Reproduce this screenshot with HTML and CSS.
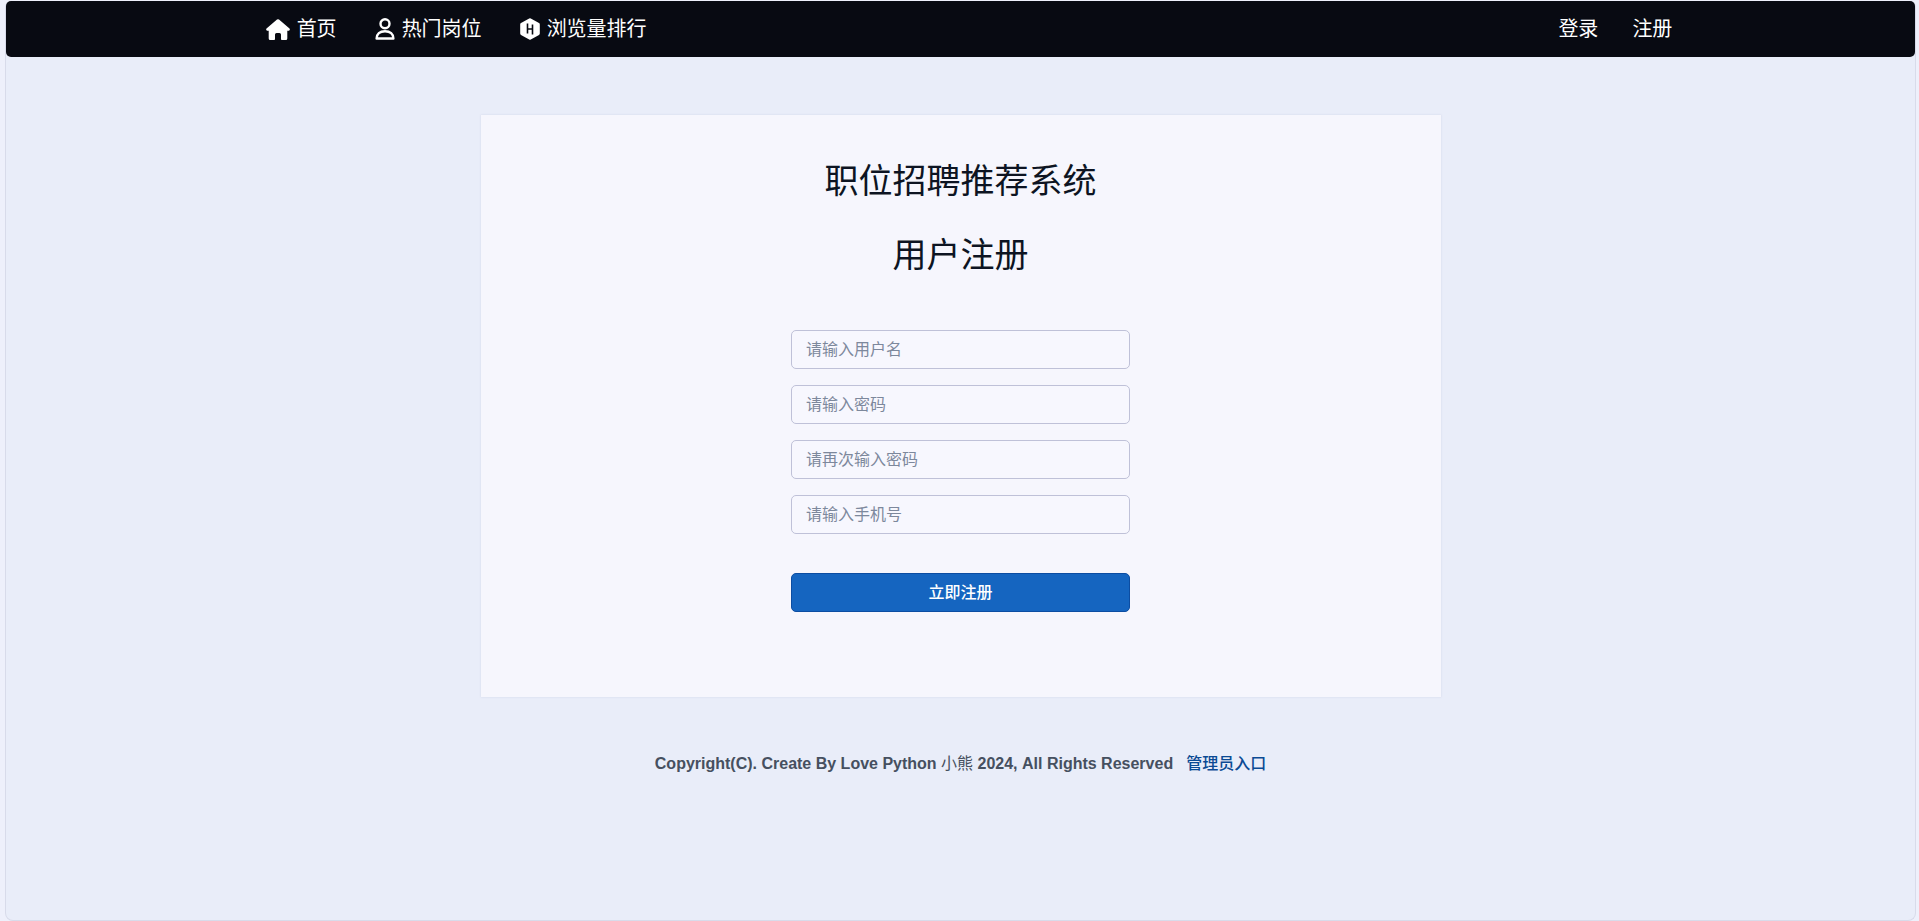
FILE: index.html
```
<!DOCTYPE html>
<html lang="zh-CN">
<head>
    <meta charset="UTF-8">
    <meta name="viewport" content="width=device-width, initial-scale=1.0">
    <title>用户注册</title>
    <link rel="stylesheet" href="styles.css">
</head>
<body>
    <div class="page">
        <nav class="navbar">
            <div class="navbar-inner">
                <div class="nav-left">
                    <a href="#">
                        <svg class="icon-home" viewBox="0 0 24 21" aria-hidden="true">
                            <path fill="currentColor" d="M11 .6Q12-.3 13 .6L23.500 9.600Q24.500 11 22.800 11.800H21.300V19.500Q21.300 21 19.800 21H15.800Q15 21 15 20V15.500Q15 14 13.500 14H10.500Q9 14 9 15.500V20Q9 21 8.200 21H4.200Q2.700 21 2.700 19.500V11.800H1.200Q-.5 11 .5 9.600Z"/>
                        </svg>
                        首页
                    </a>
                    <a href="#">
                        <svg class="icon" viewBox="0 0 20 22" aria-hidden="true">
                            <g fill="none" stroke="currentColor" stroke-width="2.400" stroke-linejoin="round">
                                <circle cx="10" cy="5.800" r="4.500"/>
                                <path d="M1.600 20.500C1.600 16 4.800 13.200 10 13.200S18.400 16 18.400 20.500Z"/>
                            </g>
                        </svg>
                        热门岗位
                    </a>
                    <a href="#">
                        <svg class="icon" viewBox="0 0 20 22" aria-hidden="true">
                            <path fill="currentColor" d="M9.200.4Q10-.1 10.800.4L19 5.100Q19.800 5.600 19.800 6.500V15.500Q19.800 16.400 19 16.900L10.800 21.600Q10 22.100 9.200 21.600L1 16.900Q.2 16.400.2 15.500V6.500Q.2 5.600 1 5.100Z"/>
                            <path fill="none" stroke="#080a12" stroke-width="1.600" d="M7.500 5.500V15.500M12.500 6.500V16.500M7.500 11H12.500"/>
                        </svg>
                        浏览量排行
                    </a>
                </div>
                <div class="nav-right">
                    <a href="#">登录</a>
                    <a href="#">注册</a>
                </div>
            </div>
        </nav>

        <main class="card">
            <h1>职位招聘推荐系统</h1>
            <h1>用户注册</h1>
            <form>
                <input type="text" name="username" placeholder="请输入用户名" aria-label="用户名">
                <input type="password" name="password" placeholder="请输入密码" aria-label="密码">
                <input type="password" name="password2" placeholder="请再次输入密码" aria-label="确认密码">
                <input type="text" name="phone" placeholder="请输入手机号" aria-label="手机号">
                <button type="button">立即注册</button>
            </form>
        </main>

        <footer>
            <span>Copyright(C). Create By Love Python <span class="author">小熊</span> 2024, All Rights Reserved</span>
            <a href="#">管理员入口</a>
        </footer>
    </div>
</body>
</html>
```
FILE: styles.css
```
* {
    box-sizing: border-box;
}

body {
    margin: 0;
    padding: 0 3px 0 5px;
    background-color: #eef0fb;
    font-family: "Liberation Sans", "Noto Sans CJK SC", sans-serif;
    font-size: 16px;
}

.page {
    min-height: 100vh;
    border: 1px solid #d8dbea;
    border-top-color: #eef0fb;
    border-radius: 8px;
    background-color: #e9edf9;
}

.navbar {
    height: 56px;
    border-radius: 5px;
    background-color: #080a12;
}

.navbar-inner {
    display: flex;
    justify-content: space-between;
    align-items: center;
    width: 75%;
    height: 100%;
    margin: 0 auto;
    padding: 0 4px 0 21px;
}

.nav-left, .nav-right {
    display: flex;
    gap: 38px;
}

.nav-right {
    gap: 34px;
}

.navbar a {
    display: flex;
    align-items: center;
    gap: 7px;
    color: #fff;
    font-size: 20px;
    line-height: 30px;
    text-decoration: none;
}

.icon-home {
    width: 24px;
    height: 21px;
}

.icon {
    width: 20px;
    height: 22px;
}

.card {
    width: 960px;
    max-width: 100%;
    margin: 58px auto 0;
    padding: 46px 20px 85px;
    background-color: #f6f6fd;
    box-shadow: 0 0 2px rgba(120, 125, 170, 0.2);
}

h1 {
    margin: 0 0 34px;
    color: #0d1422;
    font-size: 34px;
    font-weight: 400;
    line-height: 40px;
    text-align: center;
}

form {
    display: flex;
    flex-direction: column;
    gap: 16px;
    max-width: 339px;
    margin: 55px auto 0;
}

input, button {
    width: 100%;
    height: 39px;
    border-radius: 5px;
    font-family: inherit;
    font-size: 16px;
}

input {
    padding: 0 14px;
    border: 1px solid #bfc1d8;
    background-color: #f7f7fe;
}

input::placeholder {
    color: #7d889c;
}

button {
    margin-top: 23px;
    padding: 0 0 3px;
    border: 1px solid #0c4da2;
    background-color: #1565c0;
    color: #fff;
    font-weight: 500;
    cursor: pointer;
}

footer {
    display: flex;
    justify-content: center;
    gap: 13px;
    margin-top: 55px;
    color: #465060;
    font-weight: 600;
    line-height: 24px;
}

footer .author {
    font-weight: 400;
}

footer a {
    color: #0b4a94;
    font-weight: 500;
    text-decoration: none;
}
```
